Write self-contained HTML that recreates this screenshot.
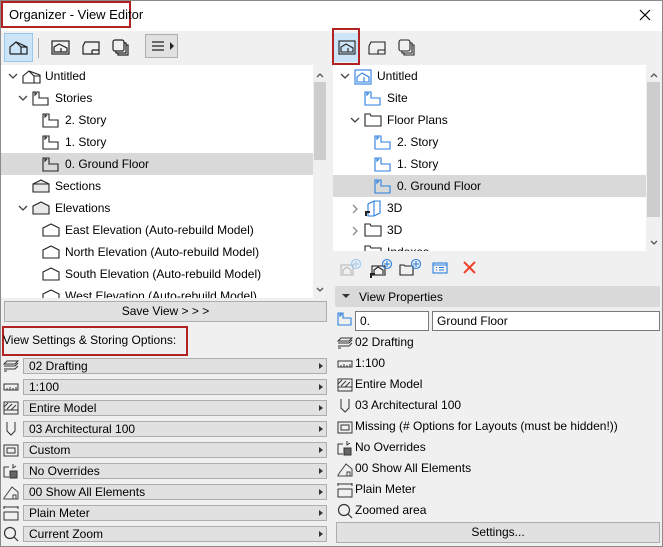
<!DOCTYPE html>
<html><head><meta charset="utf-8">
<style>
*{box-sizing:border-box;margin:0;padding:0}
body{width:663px;height:547px;position:relative;overflow:hidden;background:#f0f0f0;font-family:"Liberation Sans",sans-serif;font-size:12px;color:#000}
.a{position:absolute}
.t{position:absolute;white-space:nowrap;line-height:22px;height:22px}
.hl{background:#d9d9d9}
.sb{background:#f0f0f0}
.thumb{background:#cdcdcd}
.dd{position:absolute;left:23px;width:304px;height:16px;background:#e1e1e1;border:1px solid #adadad;line-height:14px;padding-left:5px}
.dd:after{content:"";position:absolute;right:3px;top:4px;border-left:4px solid #333;border-top:3.5px solid transparent;border-bottom:3.5px solid transparent}
.pl{position:absolute;left:355px;line-height:21px;height:21px;white-space:nowrap}
svg{position:absolute;overflow:visible}
</style></head><body>
<div class="a" style="left:0;top:0;width:663px;height:547px;border:1px solid #8a8a8a"></div>
<div class="a" style="left:1px;top:1px;width:661px;height:30px;background:#fff"></div>
<div class="a" style="left:1px;top:1px;width:130px;height:27px;border:2px solid #b22222"></div>
<div class="a" style="left:9px;top:7px;font-size:13px">Organizer - View Editor</div>
<svg style="left:639px;top:9px" width="12" height="12"><path d="M1 1L11 11M11 1L1 11" stroke="#000" stroke-width="1.2"/></svg>

<div class="a" style="left:4px;top:33px;width:29px;height:29px;background:#cce4f7;border:1px solid #99c9ef"></div>
<svg style="left:9px;top:40px" width="20" height="16" fill="none" stroke="#222" stroke-width="1.2"><path d="M1 14V7L7 2L18 7V14H1M7 2L12 7V14M12 7H18"/></svg>
<div class="a" style="left:38px;top:38px;width:1px;height:20px;background:#aaa"></div>
<svg style="left:51px;top:40px" width="20" height="16" fill="none" stroke="#222" stroke-width="1.2"><rect x="1" y="1" width="17" height="13"/><path d="M3 12V7L8 4L16 8V12ZM10 8V12"/></svg>
<svg style="left:81px;top:40px" width="20" height="16" fill="none" stroke="#222" stroke-width="1.2"><path d="M4 2H18V14H8L2 14V6ZM4 2L2 6M11 10H18M11 10V14"/></svg>
<svg style="left:112px;top:39px" width="18" height="18" fill="none" stroke="#222" stroke-width="1.2"><rect x="1" y="1" width="11" height="11" rx="2"/><path d="M12 4H14V14H4V12M14 6H16V16H6V14"/></svg>
<div class="a" style="left:145px;top:34px;width:33px;height:24px;background:#e1e1e1;border:1px solid #adadad"></div>
<svg style="left:151px;top:40px" width="26" height="12" stroke="#222" stroke-width="1.2"><path d="M1 2H13M1 6H13M1 10H13"/><path d="M19 2L23 6L19 10Z" fill="#222" stroke="none"/></svg>

<div class="a" style="left:1px;top:65px;width:312px;height:233px;background:#fff"></div>
<div class="a sb" style="left:313px;top:65px;width:14px;height:233px"></div>
<div class="a thumb" style="left:314px;top:82px;width:12px;height:78px"></div>
<svg style="left:316px;top:72px" width="8" height="6" fill="none" stroke="#555" stroke-width="1.3"><path d="M1 5L4 2L7 5"/></svg>
<svg style="left:316px;top:287px" width="8" height="6" fill="none" stroke="#555" stroke-width="1.3"><path d="M1 1L4 4L7 1"/></svg>
<div class="a hl" style="left:1px;top:153px;width:312px;height:22px"></div>
<div class="a" style="left:1px;top:65px;width:312px;height:233px;overflow:hidden">
<svg style="left:7px;top:8px" width="10" height="6" fill="none" stroke="#444" stroke-width="1.3"><path d="M1 1L5 5L9 1"/></svg>
<svg style="left:21px;top:5px" width="20" height="14" fill="none" stroke="#222" stroke-width="1.1"><path d="M1 13V6L7 1L18 5V13ZM7 1L12 6V13M12 6H18"/></svg>
<div class="t" style="left:44px;top:0">Untitled</div>
<svg style="left:17px;top:30px" width="10" height="6" fill="none" stroke="#444" stroke-width="1.3"><path d="M1 1L5 5L9 1"/></svg>
<svg style="left:31px;top:26px" width="18" height="15" fill="none" stroke="#222" stroke-width="1.1"><path d="M1 1H7V7H16V14H1ZM3 1V4L5 2"/></svg>
<div class="t" style="left:54px;top:22px">Stories</div>
<svg style="left:41px;top:48px" width="18" height="15" fill="none" stroke="#222" stroke-width="1.1"><path d="M1 1H7V7H16V14H1ZM3 1V4L5 2"/></svg>
<div class="t" style="left:64px;top:44px">2. Story</div>
<svg style="left:41px;top:70px" width="18" height="15" fill="none" stroke="#222" stroke-width="1.1"><path d="M1 1H7V7H16V14H1ZM3 1V4L5 2"/></svg>
<div class="t" style="left:64px;top:66px">1. Story</div>
<svg style="left:41px;top:92px" width="18" height="15" fill="none" stroke="#222" stroke-width="1.1"><path d="M1 1H7V7H16V14H1ZM3 1V4L5 2"/></svg>
<div class="t" style="left:64px;top:88px">0. Ground Floor</div>
<svg style="left:31px;top:114px" width="18" height="14" fill="#e8e8e8" stroke="#222" stroke-width="1.1"><path d="M1 5L9 1L17 5V13H1ZM1 5H17"/></svg>
<div class="t" style="left:54px;top:110px">Sections</div>
<svg style="left:17px;top:140px" width="10" height="6" fill="none" stroke="#444" stroke-width="1.3"><path d="M1 1L5 5L9 1"/></svg>
<svg style="left:31px;top:136px" width="18" height="14" fill="#e8e8e8" stroke="#222" stroke-width="1.1"><path d="M1 13V5L9 1L17 5V13Z"/></svg>
<div class="t" style="left:54px;top:132px">Elevations</div>
<svg style="left:41px;top:158px" width="18" height="14" fill="none" stroke="#222" stroke-width="1.1"><path d="M1 13V5L9 1L17 5V13Z"/></svg>
<div class="t" style="left:64px;top:154px">East Elevation (Auto-rebuild Model)</div>
<svg style="left:41px;top:180px" width="18" height="14" fill="none" stroke="#222" stroke-width="1.1"><path d="M1 13V5L9 1L17 5V13Z"/></svg>
<div class="t" style="left:64px;top:176px">North Elevation (Auto-rebuild Model)</div>
<svg style="left:41px;top:202px" width="18" height="14" fill="none" stroke="#222" stroke-width="1.1"><path d="M1 13V5L9 1L17 5V13Z"/></svg>
<div class="t" style="left:64px;top:198px">South Elevation (Auto-rebuild Model)</div>
<svg style="left:41px;top:224px" width="18" height="14" fill="none" stroke="#222" stroke-width="1.1"><path d="M1 13V5L9 1L17 5V13Z"/></svg>
<div class="t" style="left:64px;top:220px">West Elevation (Auto-rebuild Model)</div>
</div>

<div class="a" style="left:4px;top:301px;width:323px;height:21px;background:#e1e1e1;border:1px solid #adadad;text-align:center;line-height:19px">Save View &gt; &gt; &gt;</div>
<div class="a" style="left:2px;top:326px;width:186px;height:30px;border:2px solid #b22222"></div>
<div class="a" style="left:3px;top:333px">View Settings &amp; Storing Options:</div>

<div class="dd" style="top:358px">02 Drafting</div>
<div class="dd" style="top:379px">1:100</div>
<div class="dd" style="top:400px">Entire Model</div>
<div class="dd" style="top:421px">03 Architectural 100</div>
<div class="dd" style="top:442px">Custom</div>
<div class="dd" style="top:463px">No Overrides</div>
<div class="dd" style="top:484px">00 Show All Elements</div>
<div class="dd" style="top:505px">Plain Meter</div>
<div class="dd" style="top:526px">Current Zoom</div>
<svg style="left:3px;top:359px" width="16" height="14" fill="none" stroke="#333" stroke-width="1"><path d="M4 2H15L12 5H1ZM1 7H12L15 4M1 10H12L15 7M4 12L1 12"/></svg>
<svg style="left:3px;top:383px" width="16" height="8" fill="none" stroke="#333" stroke-width="1"><rect x="1" y="1" width="14" height="6"/><path d="M4 7V5M7 7V4M10 7V5M13 7V4"/></svg>
<svg style="left:3px;top:401px" width="16" height="14" fill="none" stroke="#333" stroke-width="1"><rect x="1" y="1" width="14" height="12"/><path d="M1 6L5 2M4 8L9 3M8 9L13 4M1 9H15"/></svg>
<svg style="left:5px;top:421px" width="12" height="15" fill="none" stroke="#333" stroke-width="1"><path d="M2 1V10L6 14L10 10V1"/></svg>
<svg style="left:3px;top:444px" width="16" height="13" fill="none" stroke="#333" stroke-width="1"><rect x="1" y="1" width="14" height="11"/><rect x="4" y="4" width="8" height="5"/></svg>
<svg style="left:3px;top:463px" width="16" height="16" fill="none" stroke="#333" stroke-width="1"><path d="M6 4H1V14H6M10 1V5L13 3"/><rect x="7" y="8" width="7" height="7" fill="#666"/></svg>
<svg style="left:3px;top:485px" width="16" height="15" fill="none" stroke="#444" stroke-width="1"><path d="M1 13L9 2L15 7V14H1ZM10 14V10H13V14"/></svg>
<svg style="left:3px;top:505px" width="16" height="16" fill="none" stroke="#333" stroke-width="1"><path d="M1 2H15M1 1V4M15 1V4"/><rect x="1" y="7" width="14" height="8"/></svg>
<svg style="left:3px;top:526px" width="16" height="16" fill="none" stroke="#333" stroke-width="1.2"><circle cx="7" cy="7" r="5.5"/><path d="M11 11L15 15"/></svg>

<div class="a" style="left:333px;top:33px;width:27px;height:29px;background:#cce4f7"></div>
<div class="a" style="left:332px;top:28px;width:28px;height:37px;border:2px solid #b22222"></div>
<svg style="left:338px;top:40px" width="18" height="15" fill="none" stroke="#222" stroke-width="1.1"><rect x="1" y="1" width="16" height="13"/><path d="M3 12V7L8 4L15 8V12ZM10 8V12"/></svg>
<svg style="left:367px;top:40px" width="20" height="16" fill="none" stroke="#222" stroke-width="1.1"><path d="M4 2H18V14H8L2 14V6ZM4 2L2 6M11 10H18M11 10V14"/></svg>
<svg style="left:398px;top:39px" width="18" height="18" fill="none" stroke="#222" stroke-width="1.1"><rect x="1" y="1" width="11" height="11" rx="2"/><path d="M12 4H14V14H4V12M14 6H16V16H6V14"/></svg>

<div class="a" style="left:333px;top:65px;width:313px;height:186px;background:#fff"></div>
<div class="a sb" style="left:646px;top:65px;width:15px;height:186px"></div>
<div class="a thumb" style="left:647px;top:82px;width:13px;height:135px"></div>
<svg style="left:650px;top:72px" width="8" height="6" fill="none" stroke="#555" stroke-width="1.3"><path d="M1 5L4 2L7 5"/></svg>
<svg style="left:650px;top:240px" width="8" height="6" fill="none" stroke="#555" stroke-width="1.3"><path d="M1 1L4 4L7 1"/></svg>
<div class="a hl" style="left:333px;top:175px;width:313px;height:22px"></div>
<div class="a" style="left:333px;top:65px;width:313px;height:186px;overflow:hidden">
<svg style="left:7px;top:8px" width="10" height="6" fill="none" stroke="#444" stroke-width="1.3"><path d="M1 1L5 5L9 1"/></svg>
<svg style="left:21px;top:4px" width="18" height="16" fill="none" stroke="#2a7fe0" stroke-width="1.1"><rect x="1" y="1" width="16" height="14"/><path d="M3 13V8L8 4L15 8V13ZM10 8V13"/></svg>
<div class="t" style="left:44px;top:0">Untitled</div>
<svg style="left:31px;top:26px" width="18" height="15" fill="none" stroke="#2a7fe0" stroke-width="1.1"><path d="M1 1H7V7H16V14H1ZM3 1V4L5 2"/></svg>
<div class="t" style="left:54px;top:22px">Site</div>
<svg style="left:17px;top:52px" width="10" height="6" fill="none" stroke="#444" stroke-width="1.3"><path d="M1 1L5 5L9 1"/></svg>
<svg style="left:31px;top:48px" width="18" height="14" fill="none" stroke="#222" stroke-width="1.1"><path d="M1 1H6L7 3H17V13H1Z"/></svg>
<div class="t" style="left:54px;top:44px">Floor Plans</div>
<svg style="left:41px;top:70px" width="18" height="15" fill="none" stroke="#2a7fe0" stroke-width="1.1"><path d="M1 1H7V7H16V14H1ZM3 1V4L5 2"/></svg>
<div class="t" style="left:64px;top:66px">2. Story</div>
<svg style="left:41px;top:92px" width="18" height="15" fill="none" stroke="#2a7fe0" stroke-width="1.1"><path d="M1 1H7V7H16V14H1ZM3 1V4L5 2"/></svg>
<div class="t" style="left:64px;top:88px">1. Story</div>
<svg style="left:41px;top:114px" width="18" height="15" fill="none" stroke="#2a7fe0" stroke-width="1.1"><path d="M1 1H7V7H16V14H1ZM3 1V4L5 2"/></svg>
<div class="t" style="left:64px;top:110px">0. Ground Floor</div>
<svg style="left:19px;top:139px" width="6" height="10" fill="none" stroke="#888" stroke-width="1.3"><path d="M1 1L5 5L1 9"/></svg>
<svg style="left:31px;top:135px" width="18" height="18" fill="none" stroke="#2a7fe0" stroke-width="1.1"><path d="M4 4L10 1H16V13L10 16H4ZM10 1V16"/><path d="M2 16V12H6" stroke="#222" stroke-width="2"/></svg>
<div class="t" style="left:54px;top:132px">3D</div>
<svg style="left:19px;top:161px" width="6" height="10" fill="none" stroke="#888" stroke-width="1.3"><path d="M1 1L5 5L1 9"/></svg>
<svg style="left:31px;top:158px" width="18" height="14" fill="none" stroke="#222" stroke-width="1.1"><path d="M1 1H6L7 3H17V13H1Z"/></svg>
<div class="t" style="left:54px;top:154px">3D</div>
<svg style="left:31px;top:180px" width="18" height="14" fill="none" stroke="#222" stroke-width="1.1"><path d="M1 1H6L7 3H17V13H1Z"/></svg>
<div class="t" style="left:54px;top:176px">Indexes</div>
</div>

<svg style="left:340px;top:259px" width="22" height="18" fill="none" stroke="#b8b8b8" stroke-width="1.1"><rect x="1" y="6" width="12" height="10"/><path d="M3 15V11L7 8L11 11V15"/><circle cx="16" cy="5" r="4.5" stroke="#9cc6f0"/><path d="M16 2V8M13 5H19" stroke="#9cc6f0"/></svg>
<svg style="left:369px;top:259px" width="24" height="20" fill="none" stroke="#222" stroke-width="1.1"><rect x="3" y="7" width="13" height="9"/><path d="M5 15V11L9 8L14 11V15"/><path d="M2 19V15H6" stroke-width="2"/><circle cx="18" cy="5" r="4.5" stroke="#2a7fe0"/><path d="M18 2V8M15 5H21" stroke="#2a7fe0"/></svg>
<svg style="left:399px;top:259px" width="24" height="18" fill="none" stroke="#222" stroke-width="1.1"><path d="M1 6H5L6 7H14V16H1Z"/><circle cx="17" cy="5" r="4.5" stroke="#2a7fe0"/><path d="M17 2V8M14 5H20" stroke="#2a7fe0"/></svg>
<svg style="left:432px;top:262px" width="16" height="12" fill="none" stroke="#2a7fe0" stroke-width="1.1"><rect x="1" y="1" width="14" height="10"/><path d="M1 3H15M4 5.5H5M7 5.5H12M4 8H5M7 8H12"/></svg>
<svg style="left:462px;top:260px" width="15" height="15" fill="none" stroke="#f0432a" stroke-width="2"><path d="M2 2L13 13M13 2L2 13"/></svg>

<div class="a" style="left:335px;top:286px;width:325px;height:21px;background:#d9d9d9;border-radius:2px"></div>
<svg style="left:342px;top:294px" width="8" height="5"><path d="M0 0H8L4 4Z" fill="#333"/></svg>
<div class="a" style="left:359px;top:290px">View Properties</div>
<svg style="left:337px;top:312px" width="16" height="15" fill="none" stroke="#2a7fe0" stroke-width="1.1"><path d="M1 1H6V6H14V13H1ZM3 1V4L5 2"/></svg>
<div class="a" style="left:355px;top:311px;width:74px;height:20px;background:#fff;border:1px solid #7a7a7a;line-height:18px;padding-left:4px">0.</div>
<div class="a" style="left:432px;top:311px;width:228px;height:20px;background:#fff;border:1px solid #7a7a7a;line-height:18px;padding-left:4px">Ground Floor</div>
<div class="pl" style="top:332px">02 Drafting</div>
<div class="pl" style="top:353px">1:100</div>
<div class="pl" style="top:374px">Entire Model</div>
<div class="pl" style="top:395px">03 Architectural 100</div>
<div class="pl" style="top:416px">Missing (# Options for Layouts (must be hidden!))</div>
<div class="pl" style="top:437px">No Overrides</div>
<div class="pl" style="top:458px">00 Show All Elements</div>
<div class="pl" style="top:479px">Plain Meter</div>
<div class="pl" style="top:500px">Zoomed area</div>
<svg style="left:337px;top:336px" width="16" height="14" fill="none" stroke="#333" stroke-width="1"><path d="M4 2H15L12 5H1ZM1 7H12L15 4M1 10H12L15 7M4 12L1 12"/></svg>
<svg style="left:337px;top:360px" width="16" height="8" fill="none" stroke="#333" stroke-width="1"><rect x="1" y="1" width="14" height="6"/><path d="M4 7V5M7 7V4M10 7V5M13 7V4"/></svg>
<svg style="left:337px;top:378px" width="16" height="14" fill="none" stroke="#333" stroke-width="1"><rect x="1" y="1" width="14" height="12"/><path d="M1 6L5 2M4 8L9 3M8 9L13 4M1 9H15"/></svg>
<svg style="left:339px;top:398px" width="12" height="15" fill="none" stroke="#333" stroke-width="1"><path d="M2 1V10L6 14L10 10V1"/></svg>
<svg style="left:337px;top:421px" width="16" height="13" fill="none" stroke="#333" stroke-width="1"><rect x="1" y="1" width="14" height="11"/><rect x="4" y="4" width="8" height="5"/></svg>
<svg style="left:337px;top:440px" width="16" height="16" fill="none" stroke="#333" stroke-width="1"><path d="M6 4H1V14H6M10 1V5L13 3"/><rect x="7" y="8" width="7" height="7" fill="#666"/></svg>
<svg style="left:337px;top:462px" width="16" height="15" fill="none" stroke="#444" stroke-width="1"><path d="M1 13L9 2L15 7V14H1ZM10 14V10H13V14"/></svg>
<svg style="left:337px;top:482px" width="16" height="16" fill="none" stroke="#333" stroke-width="1"><path d="M1 2H15M1 1V4M15 1V4"/><rect x="1" y="7" width="14" height="8"/></svg>
<svg style="left:337px;top:503px" width="16" height="16" fill="none" stroke="#333" stroke-width="1.2"><circle cx="7" cy="7" r="5.5"/><path d="M11 11L15 15"/></svg>
<div class="a" style="left:336px;top:522px;width:324px;height:21px;background:#e1e1e1;border:1px solid #adadad;text-align:center;line-height:19px">Settings...</div>
</body></html>
